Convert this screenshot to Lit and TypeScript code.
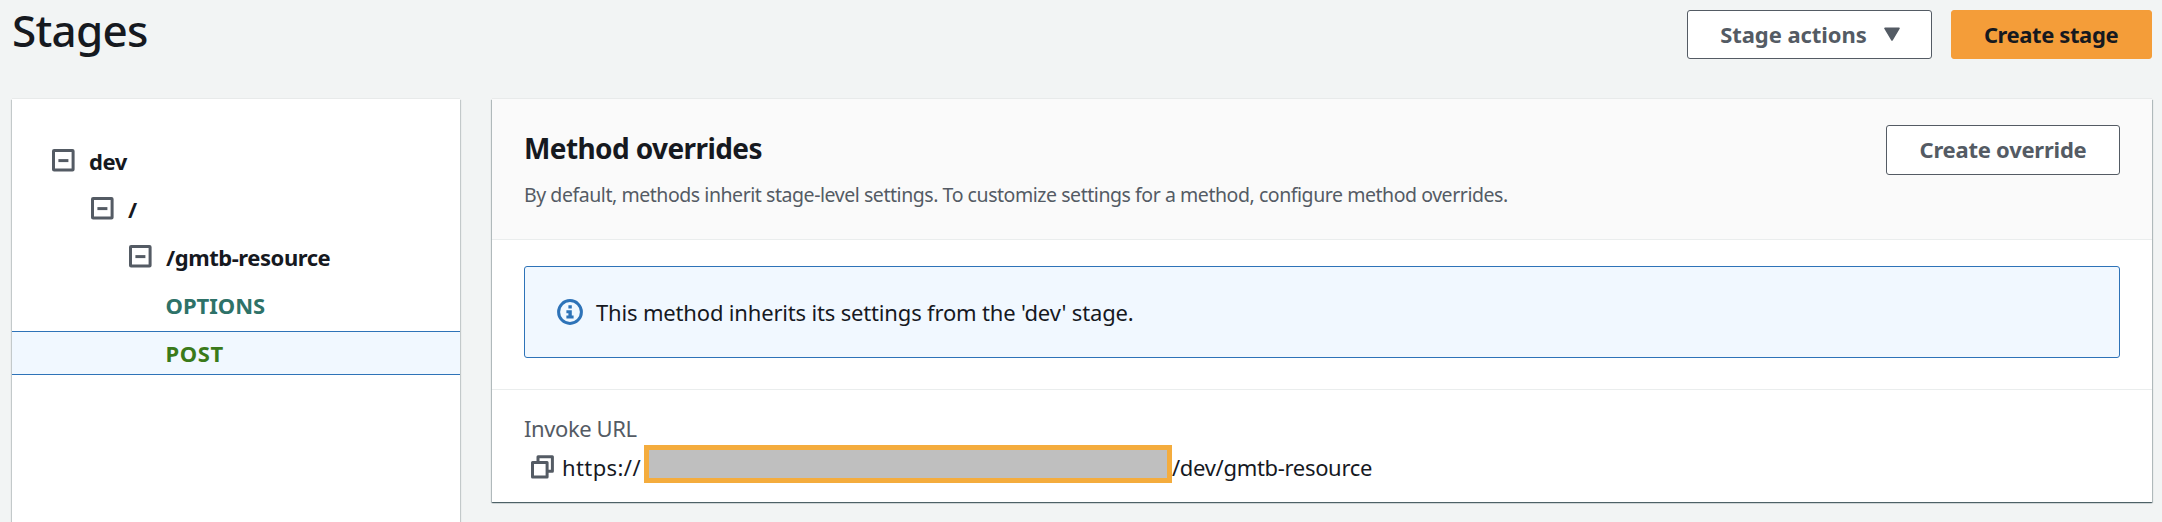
import { LitElement, html, css, svg } from "lit";
import { customElement, property } from "lit/decorators.js";
import { classMap } from "lit/directives/class-map.js";

interface TreeRow {
  label: string;
  depth: number;
  kind: "node" | "options" | "post";
  selected?: boolean;
}

const ROWS: TreeRow[] = [
  { label: "dev", depth: 0, kind: "node" },
  { label: "/", depth: 1, kind: "node" },
  { label: "/gmtb-resource", depth: 2, kind: "node" },
  { label: "OPTIONS", depth: 3, kind: "options" },
  { label: "POST", depth: 3, kind: "post", selected: true },
];

const collapseIcon = svg`
  <rect x="1.5" y="1.5" width="19.6" height="19.6" rx="0.6" fill="none" stroke="#545b64" stroke-width="3"/>
  <path d="M6.4 11.6h10" stroke="#545b64" stroke-width="3"/>`;

@customElement("resource-tree")
export class ResourceTree extends LitElement {
  @property({ attribute: false }) rows: TreeRow[] = [];

  static styles = css`
    :host {
      display: block;
      padding-top: 40px;
    }
    .rows {
      display: flex;
      flex-direction: column;
      gap: 4px;
    }
    .row {
      display: flex;
      align-items: center;
      gap: 14px;
      height: 44px;
      box-sizing: border-box;
      border: solid transparent;
      border-width: 1px 0;
      padding: 0 0 1px 40px;
      font-weight: 700;
      font-size: 22px;
      line-height: 40px;
      color: #16191f;
      letter-spacing: -0.44px;
    }
    .depth1 { padding-left: 79px; }
    .depth2 { padding-left: 117px; }
    .depth3 { padding-left: 153.5px; }
    .icon {
      width: 23px;
      height: 23px;
      flex: none;
    }
    .options { color: #2e7268; letter-spacing: 0; }
    .post { color: #3a7a1a; letter-spacing: 0.6px; }
    .selected {
      background: #f1f8ff;
      border-color: #2e73b8;
    }
  `;

  render() {
    return html`<div class="rows">
      ${this.rows.map(
        (r) => html`<div
          class=${classMap({
            row: true,
            [`depth${r.depth}`]: true,
            [r.kind]: true,
            selected: !!r.selected,
          })}
        >
          ${r.kind === "node"
            ? html`<svg class="icon" viewBox="0 0 23 23">${collapseIcon}</svg>`
            : null}
          <span>${r.label}</span>
        </div>`
      )}
    </div>`;
  }
}

@customElement("app-root")
export class AppRoot extends LitElement {
  static styles = css`
    :host {
      display: flex;
      flex-direction: column;
      height: 522px;
      overflow: hidden;
      background: #f2f4f4;
      color: #16191f;
      font-family: "Noto Sans", "Open Sans", sans-serif;
      font-size: 22px;
    }
    .top {
      display: flex;
      justify-content: space-between;
      align-items: flex-start;
      height: 99px;
      flex: none;
      box-sizing: border-box;
      padding: 3px 10px 0 12px;
    }
    h1 {
      margin: 0;
      font-size: 44px;
      line-height: 54px;
      font-weight: 500;
      letter-spacing: -0.75px;
    }
    .actions {
      display: flex;
      gap: 19px;
      padding-top: 7px;
    }
    .btn {
      display: flex;
      align-items: center;
      justify-content: center;
      box-sizing: border-box;
      height: 49px;
      border: 1px solid #545b64;
      border-radius: 3px;
      background: #fff;
      color: #545b64;
      font-family: inherit;
      font-size: 22px;
      line-height: 30px;
      font-weight: 700;
      padding: 0 0 2px;
    }
    .btn-menu { width: 245px; gap: 17px; letter-spacing: -0.06px; padding-left: 1px; }
    .btn-primary {
      width: 201px;
      background: #f49d39;
      border-color: #f49d39;
      color: #16191f;
      letter-spacing: -0.4px;
      padding-right: 1px;
    }
    .btn-override { width: 234px; height: 50px; letter-spacing: -0.24px; flex: none; }
    .caret { width: 16px; height: 14px; }
    .body {
      display: flex;
      gap: 32px;
      flex: 1;
      min-height: 0;
      padding: 0 10px 0 12px;
    }
    .card {
      background: #fff;
      box-shadow: 0 1px 1px 0 rgba(0, 28, 36, 0.3), 1px 1px 1px 0 rgba(0, 28, 36, 0.15),
        -1px 1px 1px 0 rgba(0, 28, 36, 0.15), 0 -1px 0 0 #e8eaea;
    }
    .side {
      width: 448px;
      height: 460px;
      flex: none;
    }
    .main {
      flex: 1;
      height: 403px;
      box-shadow: 0 1px 1px 0 rgba(0, 28, 36, 0.5), 1px 1px 1px 0 rgba(0, 28, 36, 0.2),
        -1px 1px 1px 0 rgba(0, 28, 36, 0.2), 0 -1px 0 0 #e8eaea;
    }
    .head {
      display: flex;
      justify-content: space-between;
      align-items: flex-start;
      box-sizing: border-box;
      height: 141px;
      padding: 26px 32px 0;
      background: #fafafa;
      border-bottom: 1px solid #eaeded;
    }
    h2 {
      margin: 0;
      font-size: 28px;
      line-height: 46px;
      font-weight: 700;
      letter-spacing: -0.6px;
    }
    .desc {
      margin: 9px 0 0;
      font-size: 19.5px;
      line-height: 30px;
      letter-spacing: -0.447px;
      color: #545b64;
    }
    .notice {
      box-sizing: border-box;
      height: 150px;
      padding: 26px 32px 0;
      border-bottom: 1px solid #eaeded;
    }
    .alert {
      display: flex;
      align-items: center;
      gap: 13px;
      box-sizing: border-box;
      height: 92px;
      padding-left: 32px;
      border: 1px solid #2e73b8;
      border-radius: 3px;
      background: #f1f8ff;
      line-height: 30px;
      letter-spacing: -0.17px;
    }
    .info { width: 26px; height: 26px; flex: none; }
    .invoke { padding: 23px 32px 0; }
    .label {
      line-height: 30px;
      letter-spacing: -0.4px;
      color: #545b64;
    }
    .url {
      display: flex;
      align-items: center;
      height: 38px;
      margin-top: 2px;
      padding-left: 7px;
    }
    .copy { width: 23px; height: 24px; flex: none; margin: 5px 8px 0 0; }
    .scheme { width: 82px; letter-spacing: 0.4px; }
    .mask {
      box-sizing: border-box;
      width: 528px;
      height: 38px;
      border: 5px solid #f4ac3d;
      background: #bfbfbf;
    }
    .path { letter-spacing: -0.32px; }
    .scheme, .path { line-height: 30px; padding-top: 5px; }
  `;

  render() {
    return html`
      <header class="top">
        <h1>Stages</h1>
        <div class="actions">
          <button class="btn btn-menu">
            Stage actions
            <svg class="caret" viewBox="0 0 16 14">
              <path d="M1 1.4h14L8 13z" fill="#545b64" stroke="#545b64" stroke-width="1.6" stroke-linejoin="round"/>
            </svg>
          </button>
          <button class="btn btn-primary">Create stage</button>
        </div>
      </header>
      <div class="body">
        <aside class="card side"><resource-tree .rows=${ROWS}></resource-tree></aside>
        <main class="card main">
          <section class="head">
            <div>
              <h2>Method overrides</h2>
              <p class="desc">By default, methods inherit stage-level settings. To customize settings for a method, configure method overrides.</p>
            </div>
            <button class="btn btn-override">Create override</button>
          </section>
          <section class="notice">
            <div class="alert">
              <svg class="info" viewBox="0 0 26 26">
                <circle cx="13" cy="13" r="11.4" fill="none" stroke="#2e73b8" stroke-width="3"/>
                <path d="M11.4 6.2h3.4v3.2h-3.4zM9.4 11.2h5.4v5.4h1.8v3H9.4v-3h2v-2.4h-2z" fill="#2e73b8"/>
              </svg>
              <span>This method inherits its settings from the 'dev' stage.</span>
            </div>
          </section>
          <section class="invoke">
            <div class="label">Invoke URL</div>
            <div class="url">
              <svg class="copy" viewBox="0 0 23 24" fill="none" stroke="#545b64" stroke-width="3" stroke-linejoin="round">
                <path d="M1.5 7.5h14.6v14.6H1.5zM7 7V1.7h14.4v14.6H17"/>
              </svg>
              <span class="scheme">https://</span>
              <span class="mask"></span>
              <span class="path">/dev/gmtb-resource</span>
            </div>
          </section>
        </main>
      </div>
    `;
  }
}
